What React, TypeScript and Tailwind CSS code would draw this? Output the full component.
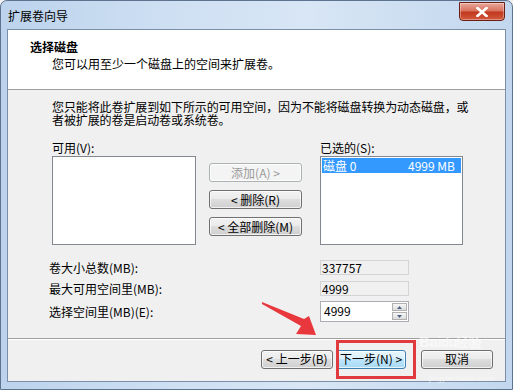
import React from 'react';

const font = { fontFamily: '"Noto Sans CJK SC", "Liberation Sans", sans-serif' };

const WinButton = ({ children, w, primary, disabled }: { children: React.ReactNode; w: string; primary?: boolean; disabled?: boolean }) => {
  let cls = 'border-[#707070] bg-[linear-gradient(#f2f2f2_0%,#ebebeb_45%,#dddddd_50%,#cfcfcf_100%)] text-black';
  if (primary) cls = 'border-[#3c7fb1] bg-[linear-gradient(#eaf6fd_0%,#d9f0fc_45%,#bee6fd_50%,#a7d9f5_100%)] text-black';
  if (disabled) cls = 'border-[#adb2b5] bg-[#f4f4f4] text-[#9a9a9a]';
  return (
    <div className={`${w} h-[19px] flex items-center justify-center rounded-[3px] border text-[12px] leading-[12px] shadow-[inset_0_0_0_1px_rgba(255,255,255,0.7)] ${cls}`}>
      {children}
    </div>
  );
};

const Field = ({ value }: { value: string }) => (
  <div className="w-[89px] h-[15px] border border-[#d4d4d4] bg-[#f0f0f0] pl-[1px] text-[12px] leading-[13px]">{value}</div>
);

export default function App() {
  return (
    <div className="w-[513px] h-[390px] overflow-hidden bg-[#f0f0f0]" style={font}>
      <div className="relative w-[513px] h-[390px] flex flex-col rounded-t-[7px] border border-[#5e7390] bg-[linear-gradient(90deg,#bcd3ec_0%,#cfe0f3_35%,#d8e6f5_60%,#c2d7ee_100%)]">
        {/* title bar */}
        <div className="h-[28px] flex items-start shrink-0">
          <div className="pl-[7px] pt-[9px] text-[12px] leading-[12px] text-black">扩展卷向导</div>
          <div className="ml-auto mr-[7px] mt-[1px] w-[46px] h-[19px] flex items-center justify-center rounded-b-[4px] border border-[#6b1e14] bg-[linear-gradient(#e9a99c_0%,#d9735f_45%,#c1391f_55%,#d35a3e_100%)] shadow-[inset_0_0_0_1px_rgba(255,255,255,0.35)]">
            <svg width="12" height="10" viewBox="0 0 12 10">
              <path d="M1.5 1 L10.5 9 M10.5 1 L1.5 9" stroke="#fff" strokeWidth="2.6" strokeLinecap="square" />
            </svg>
          </div>
        </div>

        {/* client area */}
        <div className="mx-[6px] mb-[7px] flex-1 flex flex-col border border-[#7b8ea8] bg-[#f0f0f0] text-black">
          {/* header */}
          <div className="h-[60px] shrink-0 bg-white border-b border-[#a0a0a0]">
            <div className="pl-[22px] pt-[11px] text-[12px] leading-[12px] font-bold">选择磁盘</div>
            <div className="pl-[44px] pt-[5px] text-[12px] leading-[12px]">您可以用至少一个磁盘上的空间来扩展卷。</div>
          </div>

          {/* body */}
          <div className="flex-1 flex flex-col pl-[44px]">
            <div className="pt-[10px] text-[12px] leading-[13px] tracking-[-0.1px]">
              <div>您只能将此卷扩展到如下所示的可用空间，因为不能将磁盘转换为动态磁盘，或</div>
              <div>者被扩展的卷是启动卷或系统卷。</div>
            </div>

            <div className="mt-[16px] flex">
              <div className="flex flex-col">
                <div className="text-[12px] leading-[12px] h-[14px]">可用(V):</div>
                <div className="w-[144px] h-[89px] border border-[#828790] bg-white" />
              </div>
              <div className="ml-[13px] pt-[21px] flex flex-col gap-[8px]">
                <WinButton w="w-[93px]" disabled>添加(A) &gt;</WinButton>
                <WinButton w="w-[93px]">&lt; 删除(R)</WinButton>
                <WinButton w="w-[93px]">&lt; 全部删除(M)</WinButton>
              </div>
              <div className="ml-[18px] flex flex-col">
                <div className="text-[12px] leading-[12px] h-[14px]">已选的(S):</div>
                <div className="w-[143px] h-[89px] border border-[#828790] bg-white p-[1px]">
                  <div className="h-[15px] bg-[#3399ff] text-white flex items-center text-[12px] leading-[12px]">
                    <span className="pl-[1px]">磁盘 0</span>
                    <span className="ml-auto pr-[6px]">4999 MB</span>
                  </div>
                </div>
              </div>
            </div>

            <div className="mt-[15px] flex flex-col gap-[6px] text-[12px] leading-[12px]">
              <div className="flex items-center">
                <div className="-ml-[3px] w-[271px]">卷大小总数(MB):</div>
                <Field value="337757" />
              </div>
              <div className="flex items-center">
                <div className="-ml-[3px] w-[271px]">最大可用空间里(MB):</div>
                <Field value="4999" />
              </div>
              <div className="flex items-center -mt-[1px]">
                <div className="-ml-[3px] w-[271px]">选择空间里(MB)(E):</div>
                <div className="w-[89px] h-[21px] flex border border-[#abadb3] bg-white">
                  <div className="flex-1 pl-[3px] pt-[3px]">4999</div>
                  <div className="w-[17px] flex flex-col gap-[1px] p-[1px]">
                    <div className="flex-1 flex items-center justify-center border border-[#b0b0b0] bg-[linear-gradient(#f6f6f6,#dcdcdc)]">
                      <svg width="5" height="3" viewBox="0 0 5 3"><path d="M0 3 L2.5 0 L5 3Z" fill="#4d6185" /></svg>
                    </div>
                    <div className="flex-1 flex items-center justify-center border border-[#b0b0b0] bg-[linear-gradient(#f6f6f6,#dcdcdc)]">
                      <svg width="5" height="3" viewBox="0 0 5 3"><path d="M0 0 L2.5 3 L5 0Z" fill="#4d6185" /></svg>
                    </div>
                  </div>
                </div>
              </div>
            </div>
          </div>

          {/* footer */}
          <div className="h-[43px] shrink-0 border-t border-[#a0a0a0] shadow-[inset_0_1px_0_#ffffff] flex items-center justify-end pr-[12px] pb-[2px]">
            <WinButton w="w-[72px]">&lt; 上一步(B)</WinButton>
            <div className="ml-[3px]">
              <WinButton w="w-[70px]" primary>下一步(N) &gt;</WinButton>
            </div>
            <div className="ml-[15px]">
              <WinButton w="w-[72px]">取消</WinButton>
            </div>
          </div>
        </div>

        {/* annotation: red box */}
        <div className="absolute left-[335px] top-[339px] w-[80px] h-[39px] border-[3px] border-[#e0393e]" />
        {/* annotation: arrow */}
        <svg className="absolute left-[255px] top-[295px]" width="65" height="45" viewBox="255 295 65 45">
          <path d="M261 301 L303 318 L308 315 L315 334 L295 333 L300 325 L261 303 Z" fill="#e8383d" />
        </svg>
        {/* watermark */}
        <div className="absolute left-[418px] top-[333px] text-[15px] leading-[15px] font-bold text-white/55 tracking-tight" style={{ fontFamily: '"Liberation Sans", sans-serif' }}>
          Bai<span className="text-[13px]">du经验</span>
        </div>
        <div className="absolute left-[428px] top-[374px] text-[8px] leading-[8px] text-white/60" style={{ fontFamily: '"Liberation Sans", sans-serif' }}>
          jingyan.baidu.com
        </div>
      </div>
    </div>
  );
}
